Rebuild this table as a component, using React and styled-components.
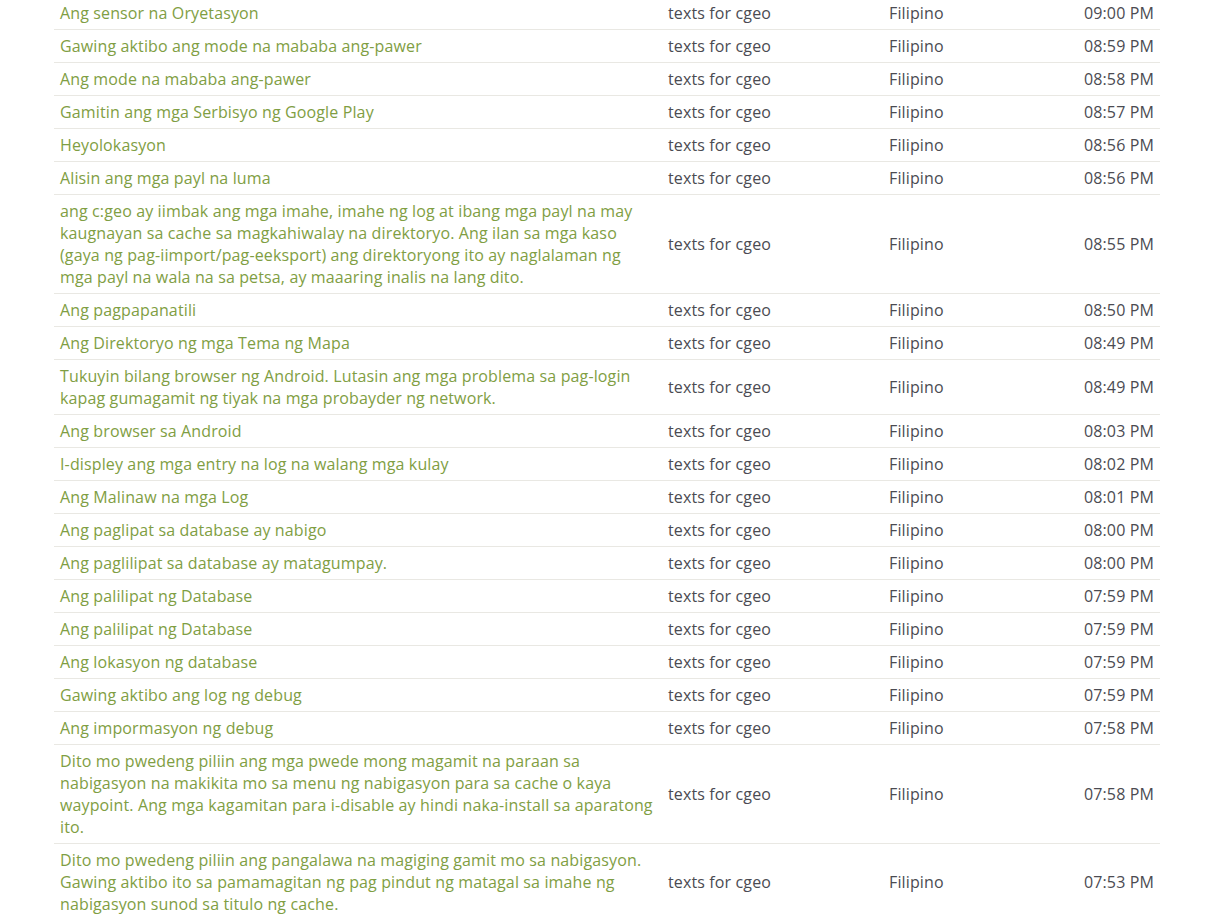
import styled, { createGlobalStyle } from 'styled-components';

const GlobalStyle = createGlobalStyle`
  body {
    margin: 0;
    background: #fff;
    font-family: "Open Sans", "Liberation Sans", sans-serif;
  }
`;

const Page = styled.div`
  padding-left: 54px;
  margin-top: -4px;
`;

const Table = styled.table`
  width: 1106px;
  border-collapse: collapse;
  font-size: 16px;
  line-height: 22px;
  letter-spacing: 0.13px;
  table-layout: fixed;
`;

const Cell = styled.td`
  border-top: 1px solid #e9e8e3;
  padding: 5px 6px 5px 7px;
  vertical-align: middle;
  color: #4b4b52;
  text-align: ${p => (p.right ? 'right' : 'left')};
`;

const Title = styled(Cell)`
  color: #7f9e43;
  padding-left: 6px;
  padding-right: 8px;
`;

const rows = [
  ['Ang sensor na Oryetasyon', '09:00 PM'],
  ['Gawing aktibo ang mode na mababa ang-pawer', '08:59 PM'],
  ['Ang mode na mababa ang-pawer', '08:58 PM'],
  ['Gamitin ang mga Serbisyo ng Google Play', '08:57 PM'],
  ['Heyolokasyon', '08:56 PM'],
  ['Alisin ang mga payl na luma', '08:56 PM'],
  ['ang c:geo ay iimbak ang mga imahe, imahe ng log at ibang mga payl na may kaugnayan sa cache sa magkahiwalay na direktoryo. Ang ilan sa mga kaso (gaya ng pag-iimport/pag-eeksport) ang direktoryong ito ay naglalaman ng mga payl na wala na sa petsa, ay maaaring inalis na lang dito.', '08:55 PM'],
  ['Ang pagpapanatili', '08:50 PM'],
  ['Ang Direktoryo ng mga Tema ng Mapa', '08:49 PM'],
  ['Tukuyin bilang browser ng Android. Lutasin ang mga problema sa pag-login kapag gumagamit ng tiyak na mga probayder ng network.', '08:49 PM'],
  ['Ang browser sa Android', '08:03 PM'],
  ['I-displey ang mga entry na log na walang mga kulay', '08:02 PM'],
  ['Ang Malinaw na mga Log', '08:01 PM'],
  ['Ang paglipat sa database ay nabigo', '08:00 PM'],
  ['Ang paglilipat sa database ay matagumpay.', '08:00 PM'],
  ['Ang palilipat ng Database', '07:59 PM'],
  ['Ang palilipat ng Database', '07:59 PM'],
  ['Ang lokasyon ng database', '07:59 PM'],
  ['Gawing aktibo ang log ng debug', '07:59 PM'],
  ['Ang impormasyon ng debug', '07:58 PM'],
  ['Dito mo pwedeng piliin ang mga pwede mong magamit na paraan sa nabigasyon na makikita mo sa menu ng nabigasyon para sa cache o kaya waypoint. Ang mga kagamitan para i-disable ay hindi naka-install sa aparatong ito.', '07:58 PM'],
  ['Dito mo pwedeng piliin ang pangalawa na magiging gamit mo sa nabigasyon. Gawing aktibo ito sa pamamagitan ng pag pindut ng matagal sa imahe ng nabigasyon sunod sa titulo ng cache.', '07:53 PM'],
];

export default function App() {
  return (
    <>
      <GlobalStyle />
      <Page>
        <Table>
          <colgroup>
            <col style={{ width: 607 }} />
            <col style={{ width: 221 }} />
            <col style={{ width: 140 }} />
            <col />
          </colgroup>
          <tbody>
            {rows.map(([text, time], i) => (
              <tr key={i}>
                <Title>{text}</Title>
                <Cell>texts for cgeo</Cell>
                <Cell>Filipino</Cell>
                <Cell right>{time}</Cell>
              </tr>
            ))}
          </tbody>
        </Table>
      </Page>
    </>
  );
}
